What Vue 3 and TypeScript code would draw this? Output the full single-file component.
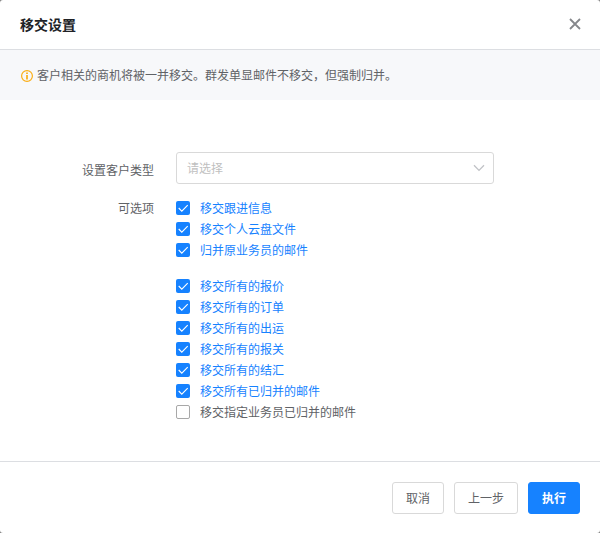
<script setup lang="ts">
import { ref } from 'vue'

interface Option {
  label: string
  checked: boolean
}

const groups = ref<Option[][]>([
  [
    { label: '移交跟进信息', checked: true },
    { label: '移交个人云盘文件', checked: true },
    { label: '归并原业务员的邮件', checked: true },
  ],
  [
    { label: '移交所有的报价', checked: true },
    { label: '移交所有的订单', checked: true },
    { label: '移交所有的出运', checked: true },
    { label: '移交所有的报关', checked: true },
    { label: '移交所有的结汇', checked: true },
    { label: '移交所有已归并的邮件', checked: true },
    { label: '移交指定业务员已归并的邮件', checked: false },
  ],
])
</script>

<template>
  <div class="dialog">
    <header class="header">
      <h1 class="title">移交设置</h1>
      <svg class="close" width="12" height="12" viewBox="0 0 12 12">
        <path d="M1 1L11 11M11 1L1 11" fill="none" stroke="#85878b" stroke-width="1.8" />
      </svg>
    </header>

    <div class="notice">
      <svg class="info" width="12" height="12" viewBox="0 0 12 12">
        <circle cx="6" cy="6" r="5.4" fill="none" stroke="#faad14" stroke-width="1.2" />
        <path d="M6 2.6V4.1M6 5V9.4" fill="none" stroke="#faad14" stroke-width="1.7" />
      </svg>
      <span class="notice-text">客户相关的商机将被一并移交。群发单显邮件不移交，但强制归并。</span>
    </div>

    <main class="body">
      <div class="row">
        <span class="label select-label">设置客户类型</span>
        <div class="select">
          <span class="placeholder">请选择</span>
          <svg width="12" height="8" viewBox="0 0 12 8">
            <path d="M1 1.2L6 6.4L11 1.2" fill="none" stroke="#c0c2c6" stroke-width="1.3" />
          </svg>
        </div>
      </div>
      <div class="row options-row">
        <span class="label">可选项</span>
        <div class="groups">
          <div v-for="(group, i) in groups" :key="i" class="group">
            <div
              v-for="option in group"
              :key="option.label"
              class="option"
              :class="{ checked: option.checked }"
              @click="option.checked = !option.checked"
            >
              <span class="box">
                <svg v-if="option.checked" width="14" height="14" viewBox="0 0 14 14">
                  <path d="M2.7 7L5.8 10.1L11.7 4.1" fill="none" stroke="#fff" stroke-width="1.1" />
                </svg>
              </span>
              <span>{{ option.label }}</span>
            </div>
          </div>
        </div>
      </div>
    </main>

    <footer class="footer">
      <button class="btn">取消</button>
      <button class="btn">上一步</button>
      <button class="btn primary">执行</button>
    </footer>
  </div>
</template>

<style>
body {
  background: #7f7f7f;
}
</style>

<style scoped>
.dialog {
  box-sizing: border-box;
  display: flex;
  flex-direction: column;
  height: 533px;
  overflow: hidden;
  border-radius: 3px;
  background: #fff;
  color: #606266;
  font: 12px/21px "Noto Sans CJK SC", sans-serif;
}
.header {
  box-sizing: border-box;
  display: flex;
  align-items: center;
  justify-content: space-between;
  height: 50px;
  padding: 0 19px 1px 20px;
  border-bottom: 1px solid #dcdee2;
}
.title {
  margin: 0;
  color: #202226;
  font-size: 14px;
  font-weight: 700;
}
.notice {
  display: flex;
  align-items: center;
  gap: 4px;
  height: 50px;
  padding: 0 21px;
  background: #f7f8fa;
}
.info {
  margin-top: 2px;
}
.notice-text {
  padding-bottom: 2px;
}
.body {
  flex: 1;
  padding-top: 52px;
}
.row {
  display: flex;
  gap: 22px;
}
.label {
  width: 154px;
  text-align: right;
}
.select-label {
  padding-top: 7px;
}
.select {
  box-sizing: border-box;
  display: flex;
  align-items: center;
  justify-content: space-between;
  width: 318px;
  height: 32px;
  padding: 0 8px 0 10px;
  border: 1px solid #d9d9d9;
  border-radius: 3px;
  color: #bfbfbf;
}
.placeholder {
  padding-bottom: 2px;
}
.options-row {
  margin-top: 13px;
}
.groups {
  display: flex;
  flex-direction: column;
  gap: 15px;
}
.option {
  display: flex;
  align-items: center;
  gap: 10px;
  height: 21px;
  cursor: pointer;
}
.checked {
  color: #1682ff;
}
.box {
  box-sizing: border-box;
  width: 14px;
  height: 14px;
  border: 1px solid #a8a8a8;
  border-radius: 2px;
}
.checked .box {
  border: 0;
  background: #1682ff;
}
.box svg {
  display: block;
}
.footer {
  box-sizing: border-box;
  display: flex;
  justify-content: flex-end;
  gap: 10px;
  height: 72px;
  padding: 20px 20px 0;
  border-top: 1px solid #dcdee2;
}
.btn {
  box-sizing: border-box;
  height: 32px;
  padding: 0 13px 2px;
  border: 1px solid #d9d9d9;
  border-radius: 3px;
  background: #fff;
  color: #606266;
  font: inherit;
}
.primary {
  border-color: #1682ff;
  background: #1682ff;
  color: #fff;
  font-weight: 700;
}
</style>
